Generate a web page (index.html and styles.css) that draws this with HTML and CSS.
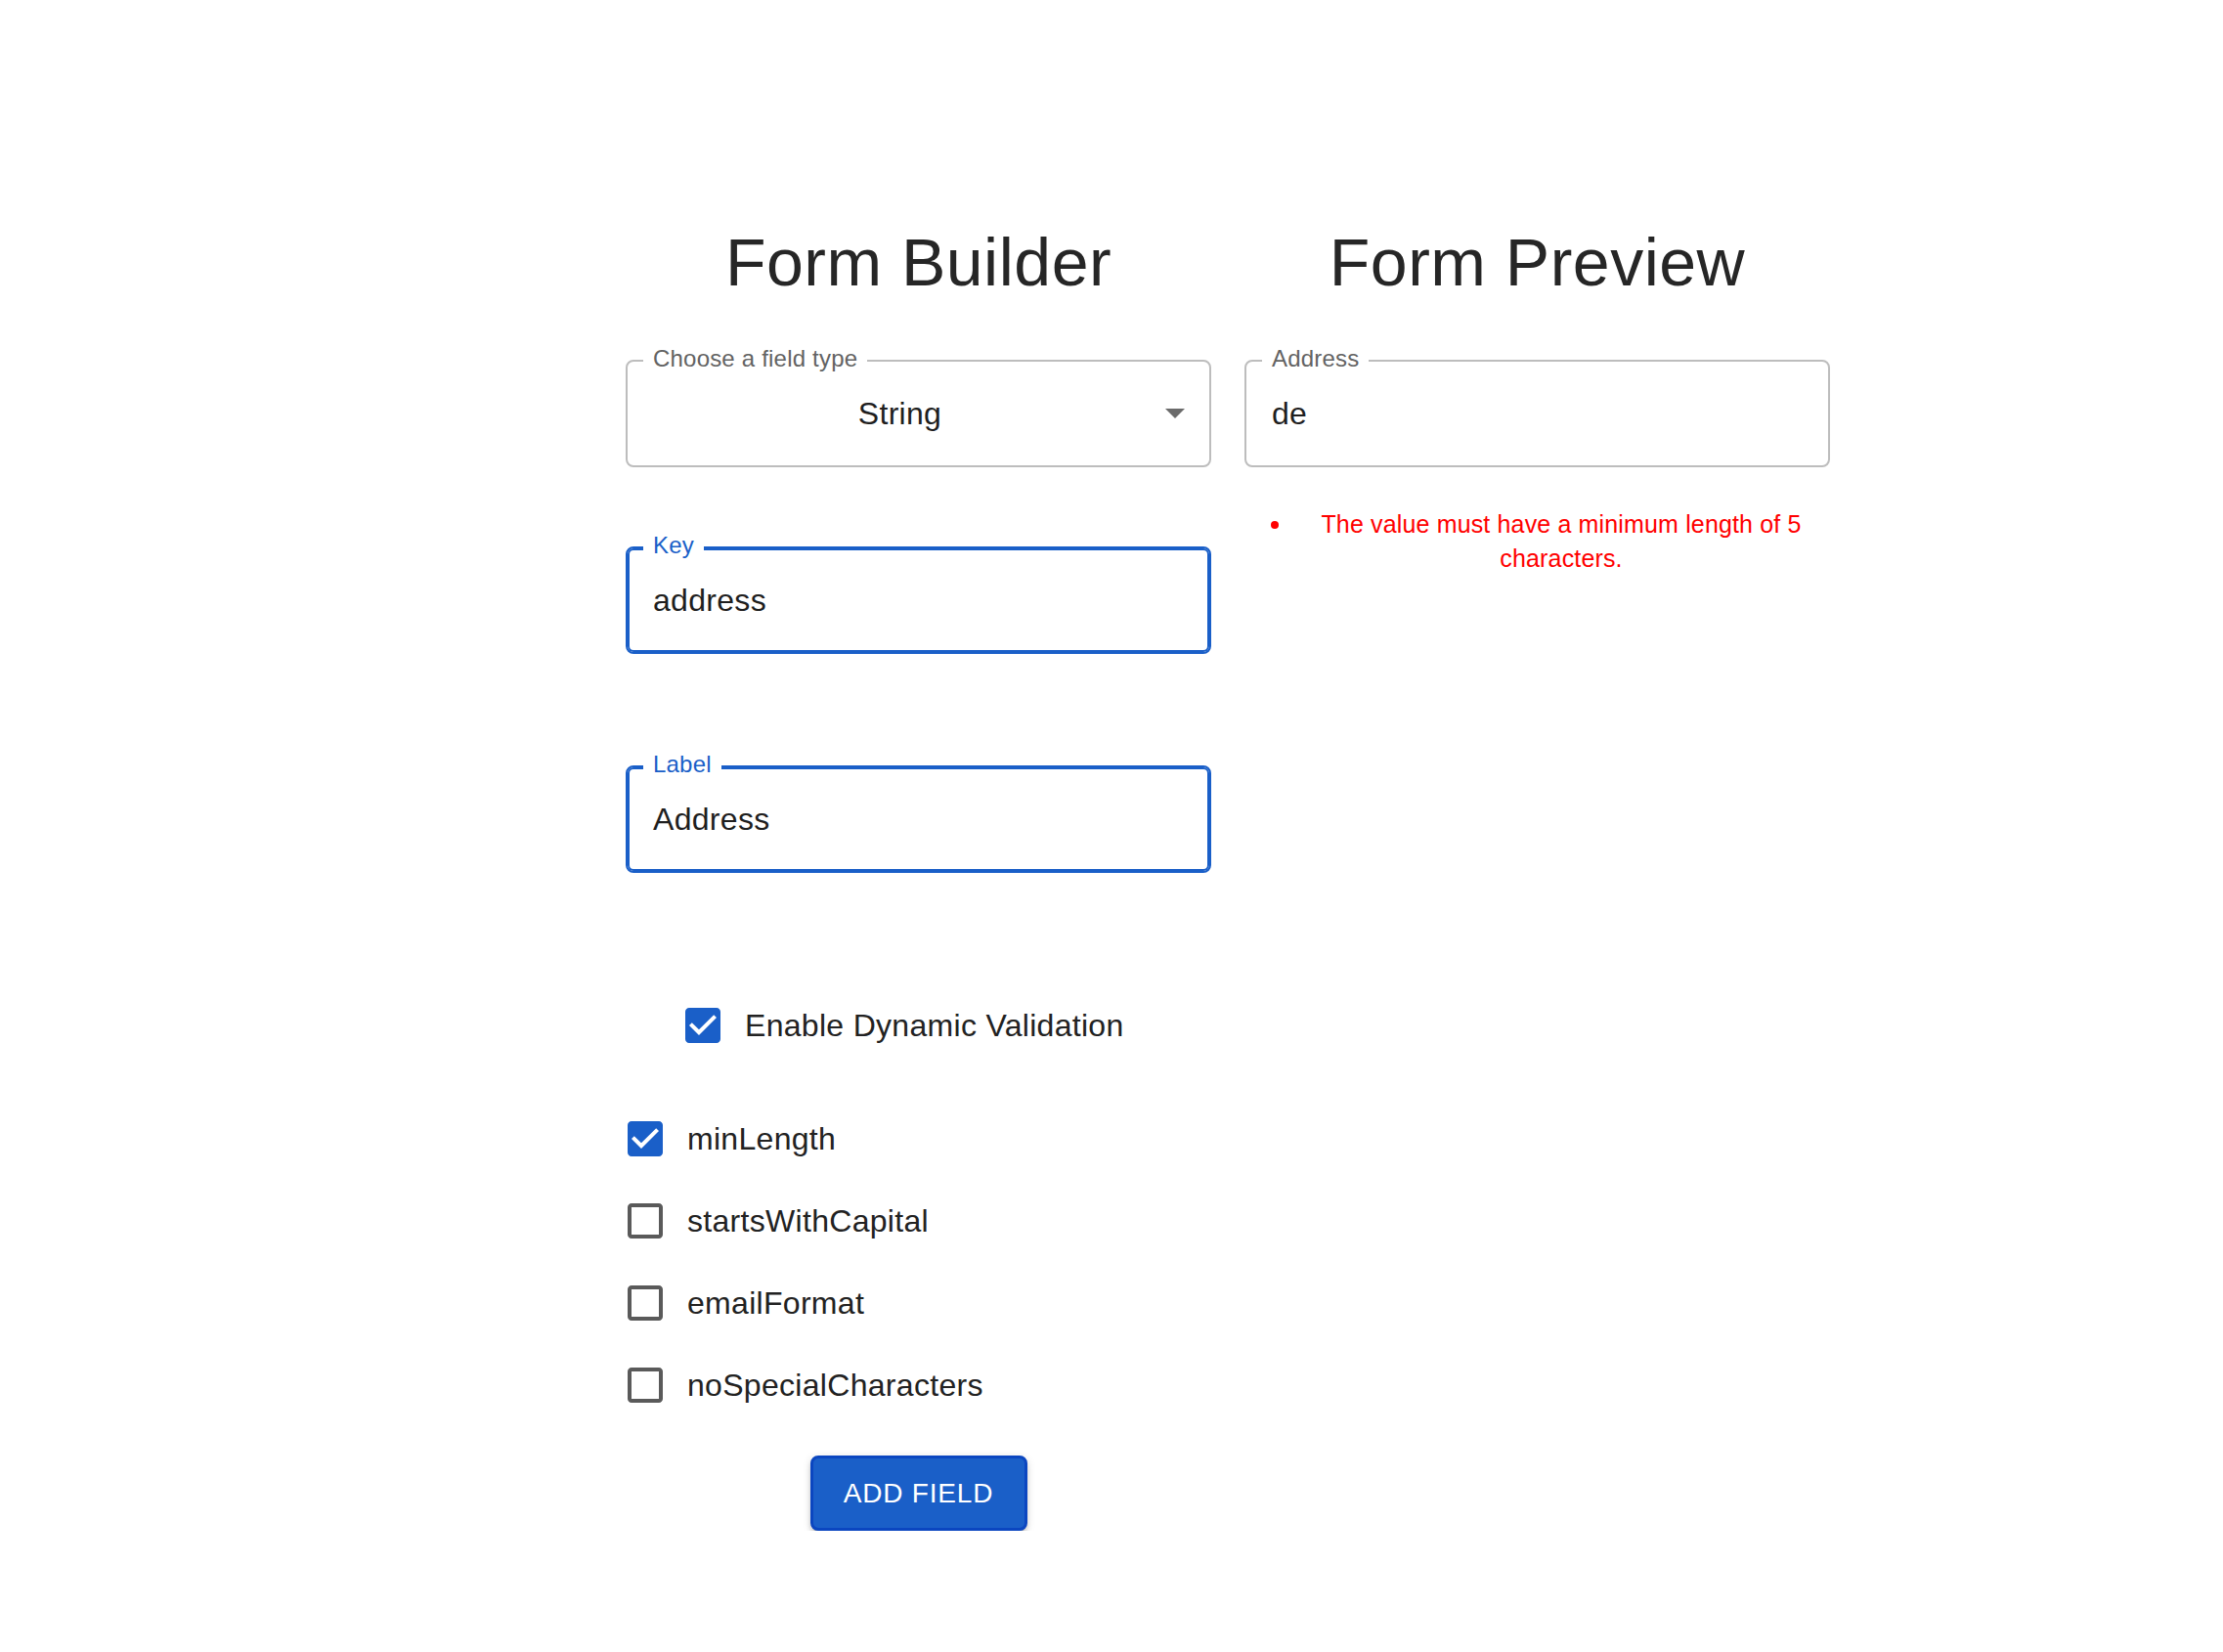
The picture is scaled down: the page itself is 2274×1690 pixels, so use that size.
FILE: index.html
```html
<!DOCTYPE html>
<html lang="en">
<head>
<meta charset="utf-8">
<title>Form Builder</title>
<link rel="stylesheet" href="styles.css">
</head>
<body>
<main class="layout">
  <section class="column">
    <h2 class="title">Form Builder</h2>

    <div class="field select gap-first">
      <span class="field-label">Choose a field type</span>
      <div class="field-value centered">String</div>
      <svg class="arrow" width="20" height="10" viewBox="0 0 20 10"><polygon points="0,0 20,0 10,10" fill="#6b6b6b"/></svg>
    </div>

    <div class="field focused gap-key">
      <span class="field-label">Key</span>
      <div class="field-value">address</div>
    </div>

    <div class="field focused gap-label">
      <span class="field-label">Label</span>
      <div class="field-value">Address</div>
    </div>

    <label class="check-row enable">
      <svg class="check-icon checked" width="48" height="48" viewBox="0 0 24 24"><path d="M19 3H5c-1.11 0-2 .9-2 2v14c0 1.1.89 2 2 2h14c1.11 0 2-.9 2-2V5c0-1.1-.89-2-2-2zm-9 14l-5-5 1.41-1.41L10 14.17l7.59-7.59L19 8l-9 9z"/></svg>
      <span class="check-text">Enable Dynamic Validation</span>
    </label>

    <div class="options">
      <label class="check-row">
        <svg class="check-icon checked" width="48" height="48" viewBox="0 0 24 24"><path d="M19 3H5c-1.11 0-2 .9-2 2v14c0 1.1.89 2 2 2h14c1.11 0 2-.9 2-2V5c0-1.1-.89-2-2-2zm-9 14l-5-5 1.41-1.41L10 14.17l7.59-7.59L19 8l-9 9z"/></svg>
        <span class="check-text">minLength</span>
      </label>
      <label class="check-row">
        <svg class="check-icon" width="48" height="48" viewBox="0 0 24 24"><path d="M19 5v14H5V5h14m0-2H5c-1.1 0-2 .9-2 2v14c0 1.1.9 2 2 2h14c1.1 0 2-.9 2-2V5c0-1.1-.9-2-2-2z"/></svg>
        <span class="check-text">startsWithCapital</span>
      </label>
      <label class="check-row">
        <svg class="check-icon" width="48" height="48" viewBox="0 0 24 24"><path d="M19 5v14H5V5h14m0-2H5c-1.1 0-2 .9-2 2v14c0 1.1.9 2 2 2h14c1.1 0 2-.9 2-2V5c0-1.1-.9-2-2-2z"/></svg>
        <span class="check-text">emailFormat</span>
      </label>
      <label class="check-row">
        <svg class="check-icon" width="48" height="48" viewBox="0 0 24 24"><path d="M19 5v14H5V5h14m0-2H5c-1.1 0-2 .9-2 2v14c0 1.1.9 2 2 2h14c1.1 0 2-.9 2-2V5c0-1.1-.9-2-2-2z"/></svg>
        <span class="check-text">noSpecialCharacters</span>
      </label>
    </div>

    <button class="add-button" type="button">Add Field</button>
  </section>

  <section class="column">
    <h2 class="title">Form Preview</h2>

    <div class="field gap-first">
      <span class="field-label">Address</span>
      <div class="field-value">de</div>
    </div>

    <ul class="errors">
      <li>The value must have a minimum length of 5 characters.</li>
    </ul>
  </section>
</main>
</body>
</html>
```

FILE: styles.css
```css
html, body {
  margin: 0;
  padding: 0;
  background: #ffffff;
}

body {
  font-family: "Liberation Sans", Arial, Helvetica, sans-serif;
  color: #222222;
}

.layout {
  display: grid;
  grid-template-columns: 599px 599px;
  column-gap: 34px;
  margin-left: 640px;
  padding-top: 226px;
  align-items: start;
}

.column {
  display: flex;
  flex-direction: column;
}

.title {
  margin: 0;
  font-size: 68px;
  line-height: 84px;
  letter-spacing: 0.5px;
  font-weight: 400;
  text-align: center;
  color: #262626;
}

.field {
  position: relative;
  box-sizing: border-box;
  height: 110px;
  border: 2px solid #bdbdbd;
  border-radius: 8px;
  display: flex;
  align-items: center;
  padding: 0 26px;
}

.field.focused {
  border-color: #1a5fc8;
  box-shadow: inset 0 0 0 2px #1a5fc8;
}

.field.select {
  padding-right: 25px;
}

.gap-first { margin-top: 58px; }
.gap-key { margin-top: 81px; }
.gap-label { margin-top: 114px; }

.field-label {
  position: absolute;
  top: -15px;
  left: 16px;
  padding: 0 10px;
  background: #ffffff;
  font-size: 24px;
  line-height: 24px;
  letter-spacing: 0.2px;
  color: #636363;
  white-space: nowrap;
}

.field.focused .field-label {
  color: #1a5fc8;
}

.field-value {
  flex: 1;
  font-size: 32px;
  letter-spacing: 0.3px;
  color: #1f1f1f;
}

.field-value.centered {
  text-align: center;
}

.arrow {
  flex: none;
  margin-left: 19px;
}

.check-row {
  display: flex;
  align-items: center;
  height: 84px;
}

.check-row.enable {
  margin-top: 114px;
  padding-left: 55px;
}

.options {
  display: flex;
  flex-direction: column;
  margin-top: 32px;
  margin-left: -4px;
}

.check-icon {
  flex: none;
  fill: #5a5a5a;
}

.check-icon.checked {
  fill: #1a5fc8;
}

.check-text {
  margin-left: 19px;
  font-size: 32px;
  letter-spacing: 0.3px;
  color: #222222;
}

.add-button {
  align-self: center;
  margin-top: 30px;
  box-sizing: border-box;
  width: 222px;
  height: 77px;
  border: 3px solid #0b46c0;
  border-radius: 8px;
  background: #1a5fc8;
  color: #ffffff;
  font-family: "Liberation Sans", Arial, Helvetica, sans-serif;
  font-size: 28px;
  letter-spacing: 0.8px;
  text-transform: uppercase;
  box-shadow: 0 6px 2px -4px rgba(0,0,0,0.2), 0 4px 4px 0 rgba(0,0,0,0.14), 0 2px 10px 0 rgba(0,0,0,0.12);
  padding: 0;
}

.errors {
  list-style: none;
  margin: 41px 0 0 57px;
  padding: 0;
  width: 534px;
}

.errors li {
  position: relative;
  font-size: 25px;
  line-height: 35px;
  letter-spacing: 0.15px;
  color: #ff0000;
  text-align: center;
}

.errors li::before {
  content: "";
  position: absolute;
  left: -30px;
  top: 14px;
  width: 8px;
  height: 8px;
  border-radius: 50%;
  background: #ff0000;
}
```
